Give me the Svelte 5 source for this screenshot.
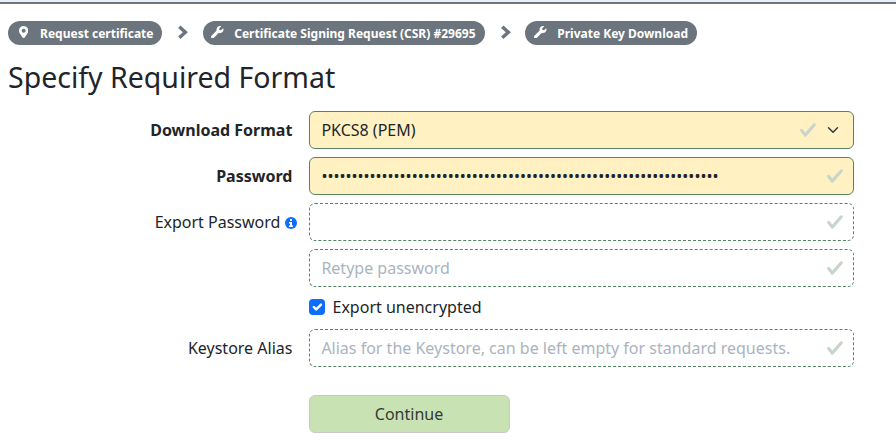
<script>
  const wrench = 'M507.73 109.1c-2.24-9.03-13.54-12.09-20.12-5.51l-74.36 74.36-67.88-11.31-11.31-67.88 74.36-74.36c6.62-6.62 3.43-17.9-5.66-20.16-47.38-11.74-99.55.91-136.58 37.93-39.64 39.64-50.55 97.1-34.05 147.2L18.74 402.76c-24.99 24.99-24.99 65.51 0 90.5 24.99 24.99 65.51 24.99 90.5 0l213.21-213.21c50.12 16.71 107.47 5.68 147.37-34.22 37.07-37.07 49.7-89.32 37.91-136.73z';
  const marker = 'M172.268 501.67C26.97 291.031 0 269.413 0 192 0 85.961 85.961 0 192 0s192 85.961 192 192c0 77.413-26.97 99.031-172.268 309.67-9.535 13.774-29.93 13.773-39.464 0zM192 272c44.183 0 80-35.817 80-80s-35.817-80-80-80-80 35.817-80 80 35.817 80 80 80z';
  const steps = [
    { label: 'Request certificate', kind: 'first', path: marker, box: '0 0 384 512' },
    { label: 'Certificate Signing Request (CSR) #29695', kind: 'second', path: wrench, box: '0 0 512 512' },
    { label: 'Private Key Download', kind: 'third', path: wrench, box: '0 0 512 512' }
  ];
  const dots = '•'.repeat(66);
</script>

{#snippet check()}
  <svg class="check" viewBox="0 0 8 8"><path d="M2.3 6.73.6 4.53c-.4-1.04.46-1.4 1.1-.8l1.1 1.4 3.4-3.8c.6-.63 1.6-.27 1.2.7l-4 4.6c-.43.5-.8.4-1.1.1z" /></svg>
{/snippet}

<div class="page">
  <div class="topbar"></div>
  <nav class="steps">
    {#each steps as step, i}
      {#if i > 0}
        <svg class="sep" viewBox="0 0 10 16"><path d="M1.3 2.7 7.3 8.2 1.3 13.7" /></svg>
      {/if}
      <span class="badge {step.kind}">
        <svg viewBox={step.box}><path d={step.path} /></svg>
        <span>{step.label}</span>
      </span>
    {/each}
  </nav>
  <h1>Specify Required Format</h1>
  <form>
    <div class="row">
      <div class="label bold">Download Format</div>
      <div class="field filled">
        <span class="value">PKCS8 (PEM)</span>
        {@render check()}
        <svg class="caret" viewBox="0 0 16 16"><path d="m2 5 6 6 6-6" /></svg>
      </div>
    </div>
    <div class="row">
      <div class="label bold">Password</div>
      <div class="field filled"><span class="value">{dots}</span>{@render check()}</div>
    </div>
    <div class="row">
      <div class="label info">
        <span>Export Password</span>
        <svg viewBox="0 0 12 12"><circle cx="6" cy="6" r="6" /><path d="M5 2h2v2H5zM4 5h3v3.5h1V10H4V8.500h1v-2H4z" /></svg>
      </div>
      <div class="field"><span class="value"></span>{@render check()}</div>
    </div>
    <div class="row">
      <div class="label"></div>
      <div class="field"><span class="value hint">Retype password</span>{@render check()}</div>
    </div>
    <div class="row option">
      <div class="label"></div>
      <div class="checkbox">
        <svg viewBox="0 0 20 20"><path d="m6 10 3 3 6-6" /></svg>
      </div>
      <span>Export unencrypted</span>
    </div>
    <div class="row">
      <div class="label">Keystore Alias</div>
      <div class="field"><span class="value hint">Alias for the Keystore, can be left empty for standard requests.</span>{@render check()}</div>
    </div>
    <div class="row submit">
      <div class="label"></div>
      <button type="button">Continue</button>
    </div>
  </form>
</div>

<style>
  :global(body) { margin: 0; background: #fff; }
  .page {
    height: 446px;
    overflow: hidden;
    font: 16px/24px "Noto Sans", sans-serif;
    color: #212529;
  }
  svg { display: block; flex: none; }
  .topbar { height: 2px; background: #e9edf5; border-bottom: 2px solid #6c757d; }
  .steps { display: flex; padding: 17px 8px 0; height: 24px; }
  .badge {
    box-sizing: border-box;
    display: flex;
    height: 24px;
    border-radius: 12px;
    background: #6c757d;
    color: #fff;
    font-size: 12px;
    font-weight: 700;
    line-height: 25px;
    white-space: nowrap;
  }
  .badge svg { height: 12.5px; margin-top: 4.5px; fill: #fff; }
  .badge span { margin-left: auto; }
  .first { width: 154px; padding: 0 8.5px 0 11px; }
  .second { width: 282px; padding: 0 9.5px 0 8px; }
  .third { width: 172px; padding: 0 9px 0 9px; }
  .sep { width: 10px; height: 16px; margin: 3px 15px 0 16px; fill: none; stroke: #6c757d; stroke-width: 3.5; }
  .sep + .third { margin-left: -1px; }
  h1 { margin: 15px 0 0 8px; font-size: 28.5px; font-weight: 400; line-height: 34px; }
  form { display: flex; flex-direction: column; gap: 8px; margin-top: 17px; }
  .row { display: flex; align-items: center; height: 38px; }
  .label { box-sizing: border-box; width: 293px; padding-right: 0.6px; margin-right: 16px; text-align: right; flex: none; }
  .bold { font-weight: 700; }
  .info { display: flex; justify-content: flex-end; align-items: center; gap: 4.4px; width: 297px; padding-right: 0.2px; margin-right: 12px; }
  .info svg { width: 12px; height: 12px; margin-top: 2px; fill: #0d6efd; }
  .info path { fill: #fff; }
  .field {
    box-sizing: border-box;
    display: flex;
    align-items: center;
    width: 545px;
    height: 38px;
    padding: 0 9px 0 11.4px;
    border: 1px dashed #558463;
    border-radius: 6px;
    white-space: nowrap;
  }
  .filled { border-style: solid; background: #fff1c2; }
  .value { flex: 1; }
  .hint { color: #a9b4be; }
  .check { width: 18px; height: 18px; fill: #c8d5ca; }
  .caret { width: 16px; height: 12px; margin: 0 3px 0 8px; fill: none; stroke: #343a40; stroke-width: 2; stroke-linecap: round; stroke-linejoin: round; }
  .option { height: 24px; margin-bottom: 2px; }
  .checkbox { width: 16px; height: 16px; margin-right: 7.5px; border-radius: 4px; background: #0d6efd; }
  .checkbox path { fill: none; stroke: #fff; stroke-width: 3; stroke-linecap: round; stroke-linejoin: round; }
  .submit { margin-top: 20px; }
  button {
    box-sizing: border-box;
    width: 201px;
    height: 38px;
    padding: 0 1px 0 0;
    border: 1px solid #c6cbc5;
    border-radius: 6px;
    background: #c8e2b3;
    color: #343a36;
    font: inherit;
  }
</style>
